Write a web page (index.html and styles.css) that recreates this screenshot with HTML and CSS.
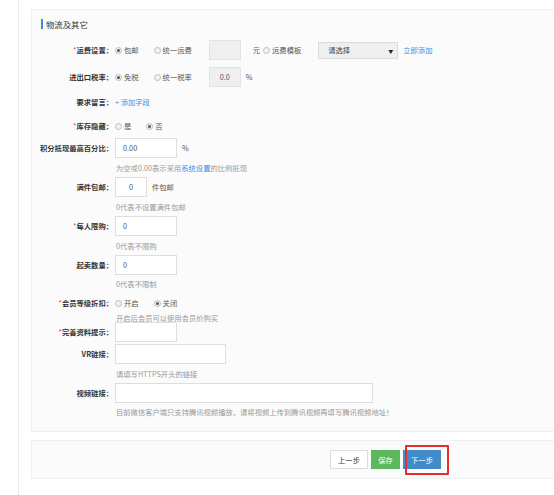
FILE: index.html
```html
<!DOCTYPE html>
<html lang="zh">
<head>
<meta charset="utf-8">
<link rel="stylesheet" href="styles.css">
</head>
<body>
<div class="page">
  <div class="panel">
    <div class="title"><span class="bar"></span>物流及其它</div>

    <div class="row r1">
      <div class="label"><i>*</i>运费设置：</div>
      <div class="ctrl">
        <span class="opt"><span class="radio on"></span>包邮</span>
        <span class="opt before-input"><span class="radio"></span>统一运费</span>
        <span class="input dis w32"></span>
        <span class="unit u-yuan">元</span>
        <span class="opt tight"><span class="radio"></span>运费模板</span>
        <span class="select">请选择<b>▼</b></span>
        <a class="link addnow">立即添加</a>
      </div>
    </div>

    <div class="row r2">
      <div class="label">进出口税率：</div>
      <div class="ctrl">
        <span class="opt"><span class="radio on"></span>免税</span>
        <span class="opt before-input"><span class="radio"></span>统一税率</span>
        <span class="input dis w32 center">0.0</span>
        <span class="unit">%</span>
      </div>
    </div>

    <div class="row r3">
      <div class="label">要求留言：</div>
      <div class="ctrl"><a class="link">+ 添加字段</a></div>
    </div>

    <div class="row r4">
      <div class="label"><i>*</i>库存隐藏：</div>
      <div class="ctrl">
        <span class="opt"><span class="radio"></span>是</span>
        <span class="opt"><span class="radio on"></span>否</span>
      </div>
    </div>

    <div class="row r5">
      <div class="label">积分抵现最高百分比：</div>
      <div class="ctrl">
        <span class="input w62">0.00</span>
        <span class="unit">%</span>
      </div>
    </div>
    <div class="help">为空或0.00表示采用<a class="link">系统设置</a>的比例抵现</div>

    <div class="row">
      <div class="label">满件包邮：</div>
      <div class="ctrl">
        <span class="input w32 center">0</span>
        <span class="unit">件包邮</span>
      </div>
    </div>
    <div class="help">0代表不设置满件包邮</div>

    <div class="row">
      <div class="label"><i>*</i>每人限购：</div>
      <div class="ctrl"><span class="input w62">0</span></div>
    </div>
    <div class="help">0代表不限购</div>

    <div class="row">
      <div class="label">起卖数量：</div>
      <div class="ctrl"><span class="input w62">0</span></div>
    </div>
    <div class="help h18">0代表不限制</div>

    <div class="row">
      <div class="label"><i>*</i>会员等级折扣：</div>
      <div class="ctrl">
        <span class="opt"><span class="radio"></span>开启</span>
        <span class="opt"><span class="radio on"></span>关闭</span>
      </div>
    </div>
    <div class="help h9">开启后会员可以使用会员价购买</div>

    <div class="row">
      <div class="label"><i>*</i>完善资料提示：</div>
      <div class="ctrl"><span class="input w62"></span></div>
    </div>

    <div class="row r11">
      <div class="label">VR链接：</div>
      <div class="ctrl"><span class="input w111"></span></div>
    </div>
    <div class="help">请填写HTTPS开头的链接</div>

    <div class="row">
      <div class="label">视频链接：</div>
      <div class="ctrl"><span class="input w258"></span></div>
    </div>
    <div class="help h17">目前微信客户端只支持腾讯视频播放，请将视频上传到腾讯视频再填写腾讯视频地址！</div>
  </div>

  <div class="panel footer">
    <span class="btn prev">上一步</span>
    <span class="btn save">保存</span>
    <span class="btn next">下一步</span>
    <span class="mark"></span>
  </div>
</div>
</body>
</html>
```

FILE: styles.css
```css
html, body {
  margin: 0;
  padding: 0;
  background: #ffffff;
  overflow: hidden;
}
body {
  font-family: "Noto Sans CJK SC", "Liberation Sans", sans-serif;
  font-size: 7.3px;
  color: #555;
}
.page {
  margin-left: 18px;
  border-left: 1px solid #e8e8e8;
  padding: 9px 0 0 12px;
  min-height: 495px;
  box-sizing: border-box;
}
.panel {
  position: relative;
  background: #fbfbfb;
  border: 1px solid #eeeeee;
  border-right: none;
  padding: 0 0 11px 0;
}
.title {
  display: flex;
  align-items: center;
  height: 12px;
  margin: 8px 0 0 9px;
  font-size: 8.4px;
  color: #333;
  line-height: 12px;
}
.title .bar {
  width: 2px;
  height: 10px;
  background: #2e8ded;
  margin-right: 3px;
}
.row {
  display: flex;
  align-items: center;
  height: 20px;
}
.r1 { margin-top: 10px; }
.r2 { margin-top: 7px; }
.r3 { margin-top: 5px; }
.r4 { margin-top: 4px; }
.r5 { margin-top: 2px; }
.r11 { margin-top: 2px; }
.label {
  width: 81px;
  flex: none;
  text-align: right;
  color: #333;
  font-weight: 600;
  white-space: nowrap;
  margin-right: 2px;
}
.label i {
  font-style: normal;
  color: #e4393c;
  font-weight: normal;
}
.ctrl {
  display: flex;
  align-items: center;
  white-space: nowrap;
}
.opt {
  display: inline-flex;
  align-items: center;
  margin-right: 15px;
  color: #555;
}
.opt.before-input { margin-right: 17px; }
.opt.tight { margin-right: 17px; }
.radio {
  width: 5px;
  height: 5px;
  border: 1px solid #bcbcbc;
  border-radius: 50%;
  background: #f2f2f2;
  margin-right: 2px;
  position: relative;
  flex: none;
}
.radio.on::after {
  content: "";
  position: absolute;
  left: 1px;
  top: 1px;
  width: 3px;
  height: 3px;
  border-radius: 50%;
  background: #555;
}
.input {
  display: inline-flex;
  align-items: center;
  box-sizing: border-box;
  height: 20px;
  border: 1px solid #dedede;
  background: #fff;
  padding-left: 7px;
  color: #555;
}
.input.dis {
  background: #efefef;
  border-color: #e2e2e2;
}
.input.center {
  justify-content: center;
  padding-left: 0;
}
.w32 { width: 32px; }
.w62 { width: 62px; }
.w111 { width: 111px; }
.w258 { width: 258px; }
.unit {
  margin-left: 5px;
  color: #555;
}
.u-yuan {
  margin-left: 12px;
  margin-right: 3px;
}
.select {
  display: inline-flex;
  align-items: center;
  justify-content: space-between;
  box-sizing: border-box;
  width: 80px;
  height: 17px;
  background: #efefef;
  border: 1px solid #dcdcdc;
  padding: 0 4px 0 9px;
  color: #444;
}
.select b {
  font-weight: normal;
  font-size: 5px;
  color: #222;
}
.link {
  color: #3a8ee6;
  text-decoration: none;
}
.addnow { margin-left: 5px; }
.help {
  display: flex;
  align-items: center;
  height: 19px;
  padding-left: 84px;
  color: #999;
  white-space: nowrap;
}
.help.h18 { height: 18px; }
.help.h9 { height: 9px; }
.help.h17 { height: 17px; }
.footer {
  margin-top: 8px;
  height: 37px;
  padding: 0 0 0 298px;
  display: flex;
  align-items: center;
  gap: 3px;
}
.btn {
  display: inline-flex;
  align-items: center;
  justify-content: center;
  box-sizing: border-box;
  height: 19px;
  color: #fff;
  font-size: 7.3px;
}
.btn.prev {
  width: 38px;
  background: #fff;
  border: 1px solid #dcdcdc;
  color: #333;
}
.btn.save {
  width: 29px;
  background: #5cb85c;
}
.btn.next {
  width: 38px;
  background: #428bca;
}
.mark {
  position: absolute;
  left: 373px;
  top: 4px;
  width: 44px;
  height: 30px;
  box-sizing: border-box;
  border: 2px solid #e52d2d;
  border-radius: 1px;
}
```
